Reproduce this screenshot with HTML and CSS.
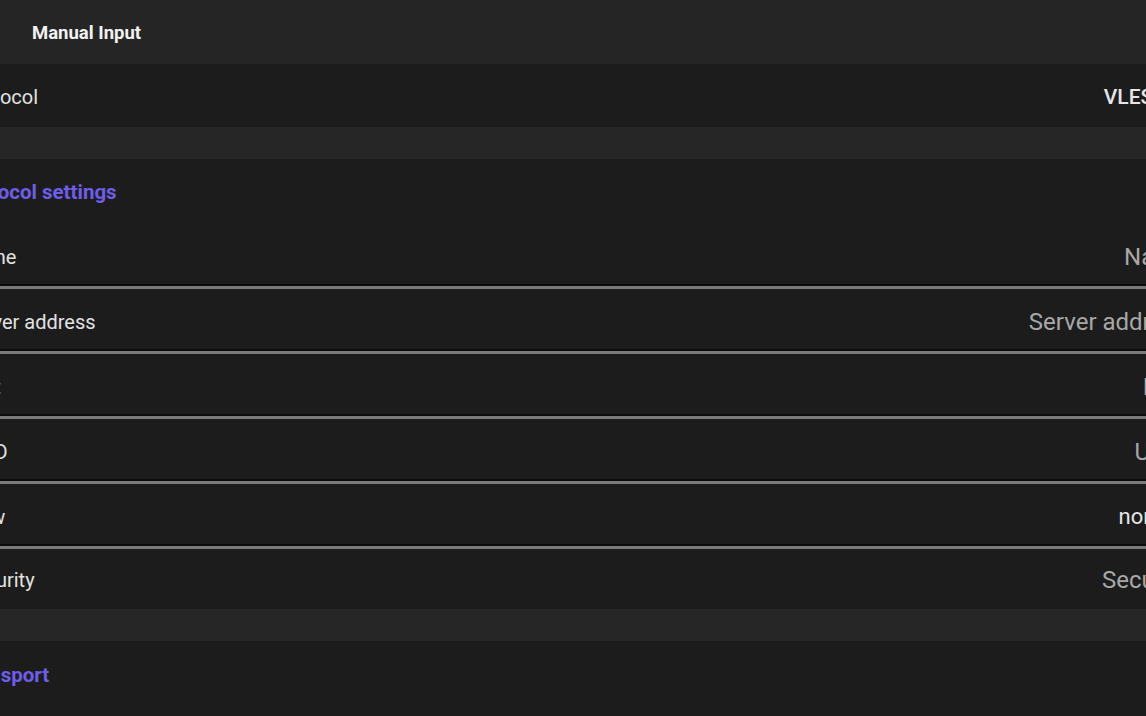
FILE: index.html
```html
<!DOCTYPE html>
<html lang="en">
<head>
<meta charset="utf-8">
<title>Manual Input</title>
<link rel="stylesheet" href="styles.css">
</head>
<body>
<div class="screen">
  <header class="toolbar"><span class="title">Manual Input</span></header>
  <div class="card">
    <div class="row top">
      <span class="label">Protocol</span>
      <span class="value strong dropdown">VLESS</span>
    </div>
  </div>
  <div class="gap"></div>
  <section class="card">
    <div class="section-title">Protocol settings</div>
    <div class="row field"><span class="label">Name</span><span class="value hint">Name</span></div>
    <div class="row field"><span class="label">Server address</span><span class="value hint">Server address</span></div>
    <div class="row field"><span class="label">Port</span><span class="value hint">Port</span></div>
    <div class="row field"><span class="label">UUID</span><span class="value hint">UUID</span></div>
    <div class="row field"><span class="label">Flow</span><span class="value dropdown">none</span></div>
    <div class="row last"><span class="label">Security</span><span class="value hint">Security</span></div>
  </section>
  <div class="gap"></div>
  <section class="card">
    <div class="section-title second">Transport</div>
  </section>
</div>
</body>
</html>
```
FILE: styles.css
```css
html, body {
  margin: 0;
  padding: 0;
  background: #1c1c1c;
  overflow: hidden;
  height: 716px;
}
.screen {
  width: 1225px;
  margin-left: -37px;
  font-family: Roboto, "Liberation Sans", sans-serif;
  color: #e2e2e2;
}
.toolbar {
  height: 64px;
  background: #252525;
  display: flex;
  align-items: center;
  padding-left: 69px;
  box-sizing: border-box;
}
.title {
  font-size: 18.5px;
  font-weight: 700;
  color: #f2f2f2;
  padding-top: 2px;
}
.card {
  background: #1c1c1c;
}
.gap {
  height: 32px;
  background: #262626;
}
.row {
  display: flex;
  align-items: center;
  justify-content: space-between;
  box-sizing: border-box;
  height: 60px;
}
.row.top {
  height: 63px;
  padding-top: 3px;
}
.row.field {
  height: 65px;
  padding-top: 3px;
  border-bottom: 3px solid #7a7a7a;
  box-shadow: inset 0 -2px 0 #0c0c0c;
}
.row.last {
  height: 60px;
  padding-top: 1px;
}
.label {
  font-size: 20px;
  color: #e2e2e2;
}
.value {
  font-size: 24px;
}
.value.hint {
  color: #a8a8a8;
}
.value.strong {
  font-weight: 500;
  font-size: 21px;
  color: #ececec;
}
.value.dropdown {
  font-size: 22px;
  margin-right: 21px;
  color: #e6e6e6;
}
.value.strong.dropdown {
  font-size: 21px;
  margin-right: 22px;
}
.section-title {
  height: 65px;
  display: flex;
  align-items: center;
  margin-left: -4px;
  font-size: 20.5px;
  font-weight: 700;
  color: #6e5de8;
}
.section-title.second {
  padding-top: 3px;
  box-sizing: border-box;
}
```
